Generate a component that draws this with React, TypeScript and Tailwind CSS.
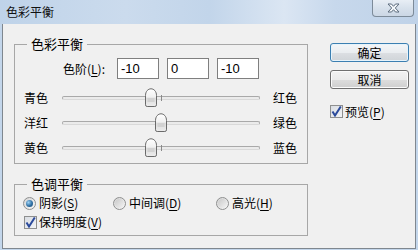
import type { ReactNode } from 'react'

const FONT = "font-['Noto_Sans_CJK_SC',sans-serif]"

function CloseGlyph() {
  return (
    <svg width="13" height="10" viewBox="0 0 13 10">
      <path
        d="M1 1 H4.5 L6.5 3.3 L8.5 1 H12 L8.3 5 L12 9 H8.5 L6.5 6.7 L4.5 9 H1 L4.7 5 Z"
        fill="#f4f7fa"
        stroke="#5d6d7e"
        strokeWidth="1"
        strokeLinejoin="round"
      />
    </svg>
  )
}

function Thumb() {
  return (
    <svg width="12" height="19" viewBox="0 0 12 19">
      <defs>
        <linearGradient id="thumbFill" x1="0" y1="0" x2="0" y2="1">
          <stop offset="0" stopColor="#ffffff" />
          <stop offset="0.45" stopColor="#f1f1f1" />
          <stop offset="0.55" stopColor="#dedede" />
          <stop offset="1" stopColor="#ececec" />
        </linearGradient>
      </defs>
      <path
        d="M0.5 7.5 C0.5 3.5 3 0.8 6 0.8 C9 0.8 11.5 3.5 11.5 7.5 V16.8 Q11.5 18.5 9.8 18.5 H2.2 Q0.5 18.5 0.5 16.8 Z"
        fill="url(#thumbFill)"
        stroke="#6a6a6a"
        strokeWidth="1"
      />
      <rect x="2.5" y="10" width="7" height="4" fill="#d2d2d2" />
    </svg>
  )
}

function SliderRow({ left, right, value }: { left: string; right: string; value: number }) {
  return (
    <div className="flex h-[25px] items-center pl-[9px]">
      <span className="w-[38px] leading-[14px]">{left}</span>
      <div className="relative flex h-[25px] w-[198px] items-center">
        <div className="h-[4px] w-full rounded-[2px] border border-[#a9a9a9] border-b-[#d9d9d9] bg-[#ebebeb]" />
        <div className="absolute left-[99px] top-[10px] h-[6px] w-px bg-[#8a8a8a]" />
        <div className="absolute top-[3px] h-[19px] w-[12px]" style={{ left: 93 + value }}>
          <Thumb />
        </div>
      </div>
      <span className="ml-[13px] leading-[14px]">{right}</span>
    </div>
  )
}

function NumBox({ value }: { value: string }) {
  return (
    <div className="flex h-[21px] w-[42px] items-center border border-[#7f7f7f] bg-white pl-[3px] font-['Liberation_Sans',sans-serif] text-[13px]">
      {value}
    </div>
  )
}

function CheckBox() {
  return (
    <div className="flex h-[13px] w-[13px] items-center justify-center border border-[#8e8f8f] bg-[linear-gradient(135deg,#d9dde3_0%,#f2f3f5_100%)]">
      <svg width="11" height="11" viewBox="0 0 11 11">
        <path d="M1.5 5.5 L4 9.5 L9.8 0.5" fill="none" stroke="#2b4a9b" strokeWidth="2" />
      </svg>
    </div>
  )
}

function Radio({ checked }: { checked?: boolean }) {
  return (
    <div className="flex h-[13px] w-[13px] items-center justify-center rounded-full border border-[#8e8f8f] bg-[linear-gradient(135deg,#d6d6d6_0%,#f7f7f7_100%)]">
      {checked ? (
        <div className="h-[7px] w-[7px] rounded-full bg-[radial-gradient(circle_at_35%_35%,#9fd3f5_0%,#2f6fa3_55%,#1b4a72_100%)]" />
      ) : (
        <div className="h-[9px] w-[9px] rounded-full bg-[linear-gradient(135deg,#c9c9c9_0%,#f3f3f3_100%)]" />
      )}
    </div>
  )
}

function Mn({ children }: { children: ReactNode }) {
  return <span className="underline underline-offset-2">{children}</span>
}

export default function App() {
  return (
    <div className={`flex h-[250px] w-[418px] flex-col bg-[#c3d6eb] text-[12px] text-black ${FONT}`}>
      {/* title bar */}
      <div className="flex h-[24px] shrink-0 items-start justify-between bg-[linear-gradient(90deg,#bfd3e9_0%,#cbdbed_30%,#c2d5ea_50%,#dbe6f3_68%,#c7d8ec_80%,#bfd2e8_100%)] pl-[6px] pr-[4px]">
        <span className="mt-[4px] text-[12px] leading-[16px] text-[#111]">色彩平衡</span>
        <div className="flex h-[17px] w-[42px] items-center justify-center rounded-b-[4px] border border-t-0 border-[#7d8b99] bg-[linear-gradient(#e8eef5_0%,#d7e1ec_50%,#cbd7e5_100%)]">
          <CloseGlyph />
        </div>
      </div>

      {/* client area */}
      <div className="mx-[2px] mb-[1px] flex flex-1 border-x border-b border-[#7f878f] bg-[#f0f0f0]">
        <div className="w-[306px] pl-[11px] pt-[12px]">
          <fieldset className="w-[294px] border border-[#a7a7a7] pb-[3px]">
            <legend className="ml-[12px] px-[4px] text-[13px] leading-[16px]">色彩平衡</legend>
            <div className="mt-[6px] flex items-center">
              <span className="ml-[48px] w-[54px] leading-[14px]">
                色阶(<Mn>L</Mn>):
              </span>
              <div className="flex gap-[8px]">
                <NumBox value="-10" />
                <NumBox value="0" />
                <NumBox value="-10" />
              </div>
            </div>
            <div className="mt-[6px]">
              <SliderRow left="青色" right="红色" value={-10} />
              <SliderRow left="洋红" right="绿色" value={0} />
              <SliderRow left="黄色" right="蓝色" value={-10} />
            </div>
          </fieldset>

          <fieldset className="mt-[12px] w-[294px] border border-[#a7a7a7] pb-[5px]">
            <legend className="ml-[12px] px-[4px] text-[13px] leading-[16px]">色调平衡</legend>
            <div className="mt-[3px] flex h-[16px] items-center pl-[8px]">
              <div className="flex w-[90px] items-center gap-[3px]">
                <Radio checked />
                <span className="leading-[14px]">阴影(<Mn>S</Mn>)</span>
              </div>
              <div className="flex w-[103px] items-center gap-[3px]">
                <Radio />
                <span className="leading-[14px]">中间调(<Mn>D</Mn>)</span>
              </div>
              <div className="flex items-center gap-[3px]">
                <Radio />
                <span className="leading-[14px]">高光(<Mn>H</Mn>)</span>
              </div>
            </div>
            <div className="mt-[3px] flex h-[16px] items-center gap-[2px] pl-[9px]">
              <CheckBox />
              <span className="leading-[14px]">保持明度(<Mn>V</Mn>)</span>
            </div>
          </fieldset>
        </div>

        {/* buttons */}
        <div className="flex flex-col pl-[21px] pt-[19px]">
          <button className="h-[19px] w-[79px] rounded-[3px] border border-[#3c7fb1] bg-[linear-gradient(#f4f6f8_0%,#eaedf0_50%,#dcdfe3_51%,#d0d4d8_100%)] text-[12px] leading-[16px] shadow-[inset_0_0_0_1px_#e6f3fb]">
            确定
          </button>
          <button className="mt-[8px] h-[19px] w-[79px] rounded-[3px] border border-[#707070] bg-[linear-gradient(#f2f2f2_0%,#ebebeb_50%,#dddddd_51%,#cfcfcf_100%)] text-[12px] leading-[16px] shadow-[inset_0_0_0_1px_#fbfbfb]">
            取消
          </button>
          <div className="mt-[15px] flex h-[15px] items-center gap-[2px]">
            <CheckBox />
            <span className="leading-[14px]">
              预览(<Mn>P</Mn>)
            </span>
          </div>
        </div>
      </div>
    </div>
  )
}
